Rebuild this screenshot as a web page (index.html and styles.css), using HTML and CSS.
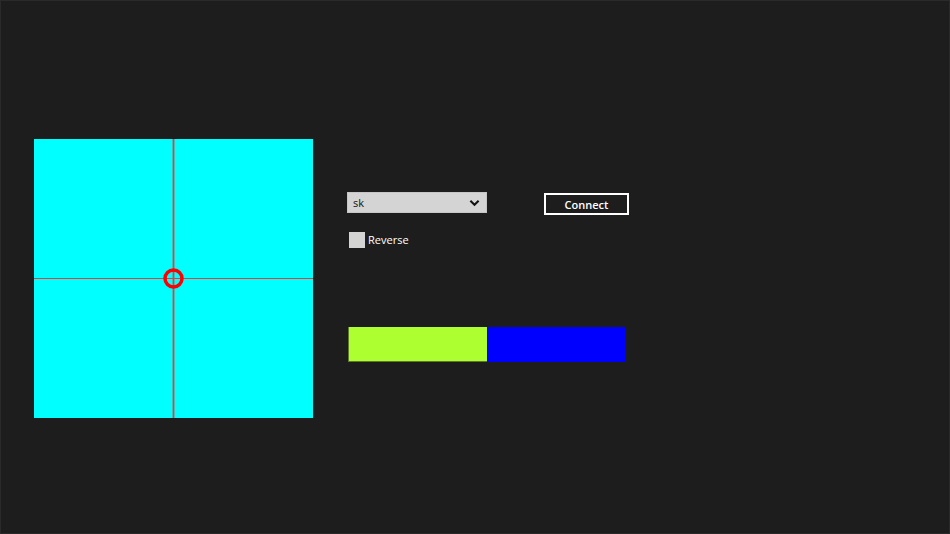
FILE: index.html
```html
<!DOCTYPE html>
<html>
<head>
<meta charset="utf-8">
<link rel="stylesheet" href="styles.css">
</head>
<body>
<div class="app">
  <div class="pad">
    <svg class="crosshair" viewBox="0 0 279 279" width="279" height="279">
      <rect x="138.6" y="0" width="1.8" height="279" fill="#f03a3a"/>
      <rect x="0" y="139" width="279" height="1" fill="#f03a3a" shape-rendering="crispEdges"/>
      <circle cx="139.5" cy="139.5" r="8.5" fill="none" stroke="#ff0000" stroke-width="3.5"/>
    </svg>
  </div>
  <div class="controls">
    <div class="toprow">
      <div class="select">
        <span class="select-text">sk</span>
        <svg class="chev" viewBox="0 0 12 8" width="11" height="8">
          <path d="M1.5 1.5 L6 6 L10.5 1.5" fill="none" stroke="#111" stroke-width="2.2"/>
        </svg>
      </div>
      <div class="btn">Connect</div>
    </div>
    <label class="check">
      <span class="box"></span>
      <span class="check-label">Reverse</span>
    </label>
    <div class="bars">
      <div class="bar bar-green"></div>
      <div class="bar bar-blue"></div>
    </div>
  </div>
</div>
</body>
</html>
```
FILE: styles.css
```css
html, body {
  margin: 0;
  padding: 0;
  height: 100%;
  background: #1d1d1d;
  font-family: "Open Sans", "Noto Sans", "Liberation Sans", sans-serif;
}
.app {
  box-sizing: border-box;
  height: 534px;
  width: 950px;
  border: 1px solid #2a2a2a;
  display: flex;
  align-items: flex-start;
  padding: 138px 0 0 33px;
  gap: 34px;
}
.pad {
  width: 279px;
  height: 279px;
  background: #00ffff;
  display: flex;
}
.crosshair {
  display: block;
}
.controls {
  display: flex;
  flex-direction: column;
  padding-top: 53px;
}
.toprow {
  display: flex;
  align-items: flex-start;
  gap: 57px;
}
.select {
  box-sizing: border-box;
  width: 140px;
  height: 21px;
  background: #d4d4d4;
  border: 1px solid #c6c6c6;
  display: flex;
  align-items: center;
  justify-content: space-between;
  padding: 0 6px 0 5px;
}
.select-text {
  font-size: 11px;
  color: #111;
  line-height: 1;
}
.chev {
  display: block;
}
.btn {
  box-sizing: border-box;
  margin-top: 1px;
  width: 85px;
  height: 22px;
  border: 2px solid #ffffff;
  color: #ffffff;
  font-size: 11px;
  font-weight: 600;
  display: flex;
  align-items: center;
  justify-content: center;
}
.check {
  display: flex;
  align-items: center;
  gap: 3px;
  margin-top: 17px;
  margin-left: 2px;
  height: 16px;
}
.box {
  width: 16px;
  height: 16px;
  background: #d4d4d4;
  display: block;
}
.check-label {
  color: #ffffff;
  font-size: 11px;
  line-height: 16px;
}
.bars {
  display: flex;
  margin-top: 79px;
  margin-left: 1px;
}
.bar {
  width: 139px;
  height: 35px;
}
.bar-green {
  box-sizing: border-box;
  background: #adff2f;
  border-left: 1px solid #5c7a2a;
  border-bottom: 1px solid #5c7a2a;
}
.bar-blue {
  background: #0000ff;
}
```
